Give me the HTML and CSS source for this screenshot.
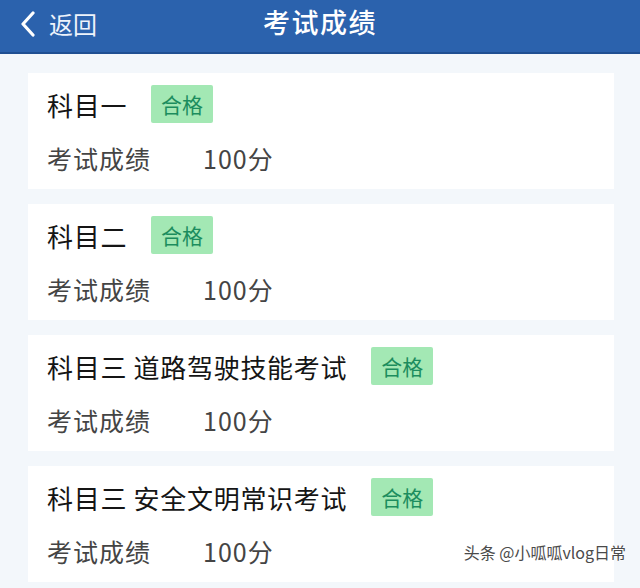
FILE: index.html
```html
<!DOCTYPE html>
<html lang="zh-CN">
<head>
  <meta charset="UTF-8" />
  <meta name="viewport" content="width=device-width, initial-scale=1.0"/>
  <title>考试成绩</title>
  <link rel="stylesheet" href="styles.css">
</head>
<body>

  <!-- Top bar -->
  <header class="topbar">
    <a class="back" href="#">
      <svg class="back-icon" viewBox="0 0 16 26" width="16" height="26">
        <path d="M13 2 L3 13 L13 24" fill="none" stroke="#fff" stroke-width="3.2" stroke-linecap="round" stroke-linejoin="round"/>
      </svg>
      <span>返回</span>
    </a>
    <h1>考试成绩</h1>
  </header>

  <!-- Score list -->
  <main class="list">
    <section class="card">
      <div class="card-title">
        <span>科目一</span>
        <span class="badge">合格</span>
      </div>
      <div class="row"><span class="label">考试成绩</span><span>100分</span></div>
    </section>

    <section class="card">
      <div class="card-title">
        <span>科目二</span>
        <span class="badge">合格</span>
      </div>
      <div class="row"><span class="label">考试成绩</span><span>100分</span></div>
    </section>

    <section class="card">
      <div class="card-title">
        <span>科目三 道路驾驶技能考试</span>
        <span class="badge">合格</span>
      </div>
      <div class="row"><span class="label">考试成绩</span><span>100分</span></div>
    </section>

    <section class="card">
      <div class="card-title">
        <span>科目三 安全文明常识考试</span>
        <span class="badge">合格</span>
      </div>
      <div class="row"><span class="label">考试成绩</span><span>100分</span></div>
      <div class="watermark">头条 @小呱呱vlog日常</div>
    </section>
  </main>

</body>
</html>
```

FILE: styles.css
```css
* {
  box-sizing: border-box;
  margin: 0;
  padding: 0;
}

body, html {
  font-family: "Noto Sans CJK SC", "Noto Sans", sans-serif;
  background: #f3f7fb;
  height: 100%;
  overflow: hidden;
}

.topbar {
  position: relative;
  height: 54px;
  background: #2b62ad;
  border-bottom: 2px solid #1f4f92;
  display: flex;
  align-items: center;
  justify-content: center;
}

.topbar h1 {
  color: #fff;
  font-size: 27px;
  font-weight: 500;
  letter-spacing: 1.5px;
  margin-top: -10px;
}

.back {
  position: absolute;
  left: 20px;
  top: 6px;
  display: flex;
  align-items: center;
  gap: 13px;
  color: #eef3fb;
  text-decoration: none;
  font-size: 24px;
}

.list {
  display: flex;
  flex-direction: column;
  gap: 15px;
  padding: 19px 26px 0 28px;
}

.card {
  position: relative;
  background: #fff;
  padding: 12px 19px 16px;
  display: flex;
  flex-direction: column;
  gap: 20px;
}

.card-title {
  display: flex;
  align-items: center;
  gap: 24px;
  font-size: 26px;
  letter-spacing: 0.7px;
  color: #151515;
  height: 38px;
}

.badge {
  background: #a3e8b4;
  color: #1c8d5e;
  font-size: 21px;
  letter-spacing: 0;
  line-height: 38px;
  padding: 0 10px;
  border-radius: 2px;
}

.row {
  display: flex;
  align-items: center;
  font-size: 25px;
  letter-spacing: 1px;
  color: #444;
  line-height: 30px;
}

.label {
  width: 156px;
}

.watermark {
  position: absolute;
  right: -12px;
  bottom: 18px;
  font-size: 16px;
  color: #4a4a4a;
  text-shadow: 0 0 2px #fff, 0 0 2px #fff;
}
```
